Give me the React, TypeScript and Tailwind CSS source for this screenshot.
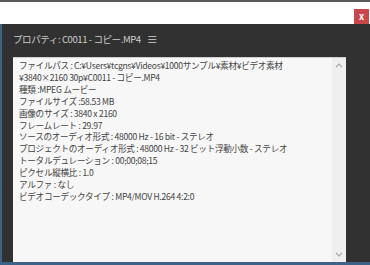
import React from 'react'

const lines = [
  'ファイルパス : C:¥Users¥tcgns¥Videos¥1000サンプル¥素材¥ビデオ素材',
  '¥3840×2160 30p¥C0011 - コピー.MP4',
  '種類 :MPEG ムービー',
  'ファイルサイズ :58.53 MB',
  '画像のサイズ : 3840 x 2160',
  'フレームレート : 29.97',
  'ソースのオーディオ形式 : 48000 Hz - 16 bit - ステレオ',
  'プロジェクトのオーディオ形式 : 48000 Hz - 32 ビット浮動小数 - ステレオ',
  'トータルデュレーション : 00;00;08;15',
  'ピクセル縦横比 : 1.0',
  'アルファ : なし',
  'ビデオコーデックタイプ : MP4/MOV H.264 4:2:0',
]

export default function App() {
  return (
    <div
      className="w-[370px] h-[265px] overflow-hidden bg-white flex flex-col"
      style={{ fontFamily: '"Noto Sans CJK JP", "Noto Sans", sans-serif' }}
    >
      {/* top strip */}
      <div className="h-[24px] shrink-0 border-t-2 border-[#5a5a5a] flex justify-end items-start pt-[7px] pr-[1px]">
        <button className="w-[15px] h-[15px] bg-[#c9474b] text-white text-[9px] leading-[15px] font-bold flex items-center justify-center">
          x
        </button>
      </div>

      {/* panel */}
      <div className="flex-1 flex flex-col bg-[#313131] border-l-2 border-b-[3px] border-[#3d6285] pl-[11px] pr-[24px]">
        <div className="h-[33px] shrink-0 flex items-center gap-[6px] text-[9.5px] tracking-[-0.4px] text-[#cfcfcf] pb-[3px]">
          <span>プロパティ: C0011 - コピー.MP4</span>
          <span className="text-[11px]">≡</span>
        </div>
        <div className="flex-1 flex bg-[#f7f7f7] border-t border-[#cfcfcf]">
          <div className="flex-1 pl-[6px] pt-[2px] text-[8.6px] tracking-[-0.3px] leading-[11.9px] text-[#444444] whitespace-nowrap overflow-hidden">
            {lines.map((l, i) => (
              <div key={i}>{l}</div>
            ))}
          </div>
          <div className="w-[14px] bg-[#efefef] flex flex-col items-center justify-between py-[5px]">
            <svg width="8" height="5" viewBox="0 0 8 5">
              <path d="M1 4 L4 1 L7 4" fill="none" stroke="#a8a8a8" strokeWidth="1.2" />
            </svg>
            <svg width="8" height="5" viewBox="0 0 8 5">
              <path d="M1 1 L4 4 L7 1" fill="none" stroke="#a8a8a8" strokeWidth="1.2" />
            </svg>
          </div>
        </div>
      </div>
    </div>
  )
}
